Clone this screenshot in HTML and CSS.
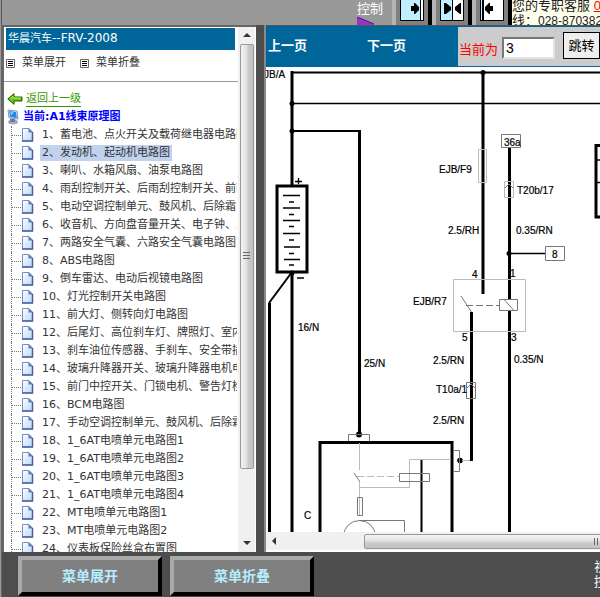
FILE: index.html
```html
<!DOCTYPE html>
<html lang="zh-CN">
<head>
<meta charset="utf-8">
<title>华晨汽车--FRV-2008</title>
<link rel="stylesheet" href="styles.css">
</head>
<body>
<header class="topbar">
  <div class="control"><span>控制</span>
    <svg width="18" height="9" viewBox="0 0 18 9"><path d="M0 0L17 7V9H0Z" fill="#9a32cd"/><path d="M0 0L17 7" stroke="#4b1478"/></svg>
  </div>
  <div class="movers">
    <button class="mover" aria-label="右移"><svg width="24" height="21" viewBox="0 0 24 21"><path d="M0 0h24v21H0z"/><path fill="#c0efff" d="M1 0h19v20H1z"/><path fill="#fff" d="M21 0h2v20h-2z"/><path d="M11 6h3V3h1l4 4v3l-4 4h-1v-3h-3z"/></svg></button>
    <button class="mover" aria-label="居中"><svg width="24" height="21" viewBox="0 0 24 21"><path d="M0 0h24v21H0z"/><path fill="#c0efff" d="M1 0h11v20H1z"/><path fill="#fff" d="M13 0h10v20H13z"/><path d="M4 3h2l5 4v3l-5 4H4zM21 3h-1l-5 4v3l5 4h1z"/></svg></button>
    <button class="mover" aria-label="左移"><svg width="24" height="21" viewBox="0 0 24 21"><path d="M0 0h24v21H0z"/><path fill="#c0efff" d="M1 0h1v20H1z"/><path fill="#fff" d="M4 0h19v20H4z"/><path d="M13 6h-3V3H9L5 7v3l4 4h1v-3h3z"/></svg></button>
  </div>
  <div class="service"><p>您的专职客服 <a href="#">0</a></p><p>线：<span class="phone">028-8703825</span></p></div>
</header>

<main class="frames">
  <section class="menu">
    <div class="menu-body">
      <h1>华晨汽车<span>--FRV-2008</span></h1>
      <div class="tools">
        <button class="tool"><svg width="9" height="9" viewBox="0 0 9 9"><path fill="#fff" stroke="#666" d="M.5.5h8v8h-8z"/><path stroke="#000" d="M2 2.500h5M2 4.500h5M2 6.500h5"/></svg>菜单展开</button>
        <button class="tool"><svg width="9" height="9" viewBox="0 0 9 9"><path fill="#fff" stroke="#666" d="M.5.5h8v8h-8z"/><path stroke="#000" d="M2 2.500h5M2 4.500h5M2 6.500h5"/></svg>菜单折叠</button>
      </div>
      <nav class="tree">
        <a class="back" href="#"><svg width="16" height="12" viewBox="0 0 16 12"><path d="M.8 6L7 .7V4h8v4H7v3.300z" fill="#6cc414" stroke="#175c00"/><path d="M3 6l3-2.500V5h8" fill="none" stroke="#b8ee55"/></svg><span>返回上一级</span></a>
        <a class="current" href="#"><svg width="13" height="16" viewBox="0 0 13 16"><ellipse cx="6" cy="13" rx="5" ry="2.500" fill="#a9a9c6"/><path d="M3 10h5v3H3z" fill="#77779b"/><path d="M1 1l9 1 1 8-9-1z" fill="#dce6f8" stroke="#8a97bd"/><path d="M2 2l7 1 .8 6L3 8z" fill="#2588e4"/><path d="M3 3l4 .5-3 3z" fill="#83d0ff"/></svg><span>当前:A1线束原理图</span></a>
        <ol class="items"></ol>
      </nav>
    </div>
    <div class="vbar"><i class="arrow up"></i><i class="vthumb"></i><i class="arrow down"></i></div>
  </section>

  <section class="viewer">
    <form class="pager">
      <a href="#">上一页</a><a href="#">下一页</a>
      <div class="jump"><label for="page">当前为</label><input id="page" value="3"><button type="button">跳转</button></div>
    </form>
    <div class="canvas">
      <svg class="diagram" width="734" height="765" viewBox="266 67 734 765">
        <g class="thick">
          <path d="M292 71V186M292 272V800M359.500 131V435" stroke-width="3"/>
          <path d="M269.500 303V800M320 800V442.500H452V800" stroke-width="3"/>
          <path d="M277 186h30v86h-30z" stroke-width="3"/>
          <path d="M483 72V294M509.500 147V300M509.500 310V800M471.500 312V461" stroke-width="3"/>
          <path d="M620 145.500H596V217H620" stroke-width="3"/>
          <path d="M291 72.500H800M292 131H361M421.500 460V800M292 272L269 303" stroke-width="2"/>
        </g>
        <path class="thick" stroke-width="1.500" d="M292 103.500H800M509 253.500H546M597 160H640M597 182.500H640"/>
        <path class="thick" stroke-width="1.300" d="M283 195.500h17M283 208h17M283 220.500h17M283 233.500h17M284 247h16M284 259.500h16M289 202h5M289 214.500h5M289 226.500h5M289 240h5M289 253.500h5M289 265h5M295 181.500h7M298.500 178v6M297 278h7"/>
        <g><circle cx="292" cy="103.500" r="2.500"/><circle cx="292" cy="131" r="2.500"/><circle cx="292" cy="273" r="2.500"/><circle cx="483" cy="72.500" r="2.500"/><circle cx="509" cy="253.500" r="2.500"/><circle cx="359" cy="434.500" r="3"/><circle cx="460" cy="460.500" r="2.800"/></g>
        <g class="light"><path d="M478.500 149.500h8v33h-8zM504.500 181.500h9v16h-9zM453.500 279.500h72v52h-72zM359.500 443v27M359.500 482v34M360 487.500h49.500v-28H451M462 460.500h8"/></g>
        <g class="fine"><path d="M501.500 134.500h19v13h-19zM545.500 246.500h19v14h-19zM499.500 299.500h18v11h-18zM466.500 382.500h9v16h-9zM348.500 441v-6.500h21v6.500M454 450.500h5.500v21H454M399.500 473.500h30v8h-30zM357.500 497.500h5v18h-5zM359 520.500h45.500V800M461 296l10.500 16M354 473l6 9M505 188l4-4 4 4M467 388l4-4 4 4"/><path d="M504 299.500l10 11" /><path stroke-dasharray="7 3" d="M466 305.500h33"/><circle cx="359.500" cy="536.500" r="16"/></g>
        <path class="light" stroke-dasharray="7 3" d="M357 476.500h42"/>
        <g class="labels">
          <text x="264" y="78">JB/A</text><text x="504" y="146">36a</text><text x="439" y="173">EJB/F9</text><text x="517" y="194">T20b/17</text><text x="448" y="234">2.5/RH</text><text x="516" y="234">0.35/RN</text><text x="552" y="258">8</text><text x="472" y="278">4</text><text x="510" y="277">1</text><text x="413" y="305">EJB/R7</text><text x="462" y="341">5</text><text x="511" y="341">3</text><text x="433" y="364">2.5/RN</text><text x="514" y="363">0.35/N</text><text x="436" y="393">T10a/1</text><text x="433" y="424">2.5/RN</text><text x="298" y="331">16/N</text><text x="364" y="367">25/N</text><text x="304" y="519">C</text>
        </g>
      </svg>
    </div>
    <div class="hbar"><i class="arrow left"></i><i class="hthumb"></i></div>
  </section>
</main>

<footer class="bottom">
  <button>菜单展开</button><button>菜单折叠</button>
  <p class="view-label">视<br>控</p>
</footer>
<script src="tree.js"></script>
</body>
</html>
```
FILE: styles.css
```css
* { box-sizing: border-box; }
body {
  margin: 0;
  height: 100vh;
  display: grid;
  grid-template-rows: 25px minmax(0, 1fr) 45px;
  overflow: hidden;
  background: #4d4d4d;
  border-left: 1px solid #999;
  font: 11px/18px "DejaVu Sans", "Noto Sans CJK SC", sans-serif;
  color: #333;
}
button { font: inherit; padding: 0; }
p { margin: 0; }
svg { display: block; flex: none; }

.topbar {
  display: flex;
  justify-content: flex-end;
  background: #999;
  border-left: 1px solid #555;
  overflow: hidden;
}
.control { width: 35px; color: #fff; font-size: 13px; line-height: 17px; }
.control span { display: block; }
.movers { display: flex; }
.mover {
  width: 40px;
  height: 25px;
  background: #808080;
  border: 0 solid #000;
  border-left: 4px solid #b3b3b3;
  border-right-width: 4px;
  display: flex;
  align-items: flex-start;
  justify-content: center;
}
.service {
  width: 88px;
  background: #ffffee;
  color: #222;
  font: 13px/15px "Liberation Sans", "Noto Sans CJK SC", sans-serif;
  white-space: nowrap;
  overflow: hidden;
}
.service p:first-child { height: 13px; line-height: 12px; }
.service a { color: #f00; }
.phone { font-size: 12px; }

.frames {
  display: grid;
  grid-template-columns: 253px minmax(0, 1fr);
  gap: 8px;
  border-left: 2px solid #666;
  overflow: hidden;
}
.menu {
  display: flex;
  min-height: 0;
  background: #fff;
  border: solid #666;
  border-width: 2px 0 0 1px;
}
.menu-body { flex: 1; min-width: 0; overflow: hidden; }
h1 {
  margin: 1px 3px 0 2px;
  height: 22px;
  padding-left: 2px;
  background: #069;
  color: #fff;
  font-size: 11px;
  font-weight: normal;
  line-height: 20px;
}
h1 span { font-size: 12px; }
.tools {
  display: flex;
  gap: 14px;
  height: 32px;
  padding: 3px 2px 0;
  border-bottom: 1px solid #999;
}
.tool {
  display: flex;
  align-items: center;
  gap: 7px;
  height: 20px;
  border: 0;
  background: none;
  color: #333;
}
.tree { padding: 7px 1px 0 3px; }
.tree a { text-decoration: none; white-space: nowrap; }
.back { display: flex; align-items: center; gap: 3px; height: 19px; color: #390; }
.back span { border-bottom: 1px solid #390; line-height: 15px; }
.current { display: flex; align-items: center; gap: 3px; height: 18px; color: #00f; font-weight: bold; }
.items { list-style: none; margin: 0; padding: 0 0 0 4px; overflow: hidden; }
.items li {
  display: flex;
  align-items: center;
  height: 18px;
  border-left: 1px dotted #777;
}
.items li::before { content: ""; width: 9px; border-top: 1px dotted #777; flex: none; }
.items a { margin-left: 6px; padding: 0 2px; line-height: 16px; color: #333; }
.items .selected { background: #c1d2ee; }

.arrow { width: 0; height: 0; border: 4px solid transparent; }
.up { border-top: 0; border-bottom-color: #333; }
.down { border-bottom: 0; border-top-color: #333; }
.left { border-left: 0; border-right-color: #333; }
.vbar {
  width: 17px;
  margin-right: 1px;
  padding: 6px 1px 7px;
  display: flex;
  flex-direction: column;
  align-items: center;
  background: #f0f0f0;
}
.vthumb {
  width: 14px;
  height: 83%;
  margin: 7px 0 auto;
  border: 1px solid #999;
  border-radius: 2px;
  background:
    repeating-linear-gradient(#666 0 1px, transparent 1px 3px) center / 7px 8px no-repeat,
    linear-gradient(90deg, #f5f5f5, #e2e2e4 45%, #cacacd 60%, #c2c2c5);
}

.viewer {
  display: flex;
  flex-direction: column;
  min-width: 0;
  min-height: 0;
  background: #fff;
  border-left: 2px solid #888;
}
.pager {
  display: flex;
  height: 42px;
  background: #069;
  border-top: 1px solid #555;
  overflow: hidden;
}
.pager a {
  flex: none;
  width: 99px;
  padding-left: 2px;
  color: #fff;
  font-size: 13px;
  font-weight: bold;
  line-height: 40px;
  text-decoration: none;
}
.jump {
  flex: 1;
  min-width: 0;
  margin: 1px 0 1px -6px;
  padding-left: 1px;
  display: flex;
  align-items: center;
  background: #ccc;
  color: #f00;
  font-size: 13px;
}
.jump label { flex: none; padding-top: 6px; }
.jump input {
  flex: none;
  width: 53px;
  height: 22px;
  margin: 2px 8px 0 4px;
  padding: 0 2px;
  border: 2px solid;
  border-color: #777 #e3e3e3 #e3e3e3 #777;
  background: #fff;
  color: #000;
  font: 14px "Liberation Sans", sans-serif;
}
.jump button {
  flex: 1;
  min-width: 0;
  height: 27px;
  margin-bottom: 2px;
  border: 1px solid #000;
  background: #eee;
  color: #000;
}
.canvas { flex: 1; min-height: 0; overflow: hidden; }
.thick { fill: none; stroke: #000; }
.fine { fill: none; stroke: #777; }
.light { fill: none; stroke: #bbb; }
.labels { font: 10px "Liberation Sans", sans-serif; fill: #000; stroke: #000; stroke-width: .2px; }
.hbar {
  display: flex;
  align-items: center;
  height: 18px;
  margin-bottom: 2px;
  padding-left: 6px;
  background: #f0f0f0;
  overflow: hidden;
}
.hthumb {
  flex: 1;
  height: 15px;
  margin: 0 -232px 0 88px;
  border: 1px solid #999;
  border-radius: 2px;
  background:
    repeating-linear-gradient(90deg, #666 0 1px, transparent 1px 3px) center / 8px 7px no-repeat,
    linear-gradient(#f5f5f5, #e2e2e4 45%, #cacacd 60%, #c2c2c5);
}

.bottom {
  display: flex;
  gap: 8px;
  padding: 4px 0 1px 16px;
  border-left: 1px solid #666;
  overflow: hidden;
}
.bottom button {
  width: 144px;
  height: 40px;
  border: 4px solid;
  border-color: #aaa #000 #000 #aaa;
  background: #808080;
  color: #b8ecff;
  font-size: 14px;
  font-weight: bold;
}
.view-label {
  width: 6px;
  margin: 3px 0 0 auto;
  color: #fff;
  font-size: 13px;
  line-height: 15px;
}
```
FILE: tree.js
```js
const titles = [
  "蓄电池、点火开关及载荷继电器电路图", "发动机、起动机电路图", "喇叭、水箱风扇、油泵电路图",
  "雨刮控制开关、后雨刮控制开关、前雨刮", "电动空调控制单元、鼓风机、后除霜电路图",
  "收音机、方向盘音量开关、电子钟、点烟器", "两路安全气囊、六路安全气囊电路图", "ABS电路图",
  "倒车雷达、电动后视镜电路图", "灯光控制开关电路图", "前大灯、侧转向灯电路图",
  "后尾灯、高位刹车灯、牌照灯、室内灯", "刹车油位传感器、手刹车、安全带插锁",
  "玻璃升降器开关、玻璃升降器电机电路图", "前门中控开关、门锁电机、警告灯检测",
  "BCM电路图", "手动空调控制单元、鼓风机、后除霜", "1_6AT电喷单元电路图1", "1_6AT电喷单元电路图2",
  "1_6AT电喷单元电路图3", "1_6AT电喷单元电路图4", "MT电喷单元电路图1", "MT电喷单元电路图2",
  "仪表板保险丝盒布置图"
];
const page = '<svg width="13" height="16" viewBox="0 0 13 16"><defs><linearGradient id="paper" x2="1" y2="1"><stop stop-color="#fff"/><stop offset="1" stop-color="#b9d8fb"/></linearGradient></defs><path d="M1.500 1.500H8L11.500 5V14H1.500Z" fill="url(#paper)" stroke="#7391c8"/><path d="M7.500 1L12 5.500H7.500Z" fill="#6078b4"/><path d="M11.500 5V14H1" fill="none" stroke="#4d5f99" stroke-width="1.500"/></svg>';
document.querySelector(".items").innerHTML = titles.map((t, i) =>
  `<li>${page}<a href="#"${i === 1 ? ' class="selected"' : ""}>${i + 1}、${t}</a></li>`).join("");
```
